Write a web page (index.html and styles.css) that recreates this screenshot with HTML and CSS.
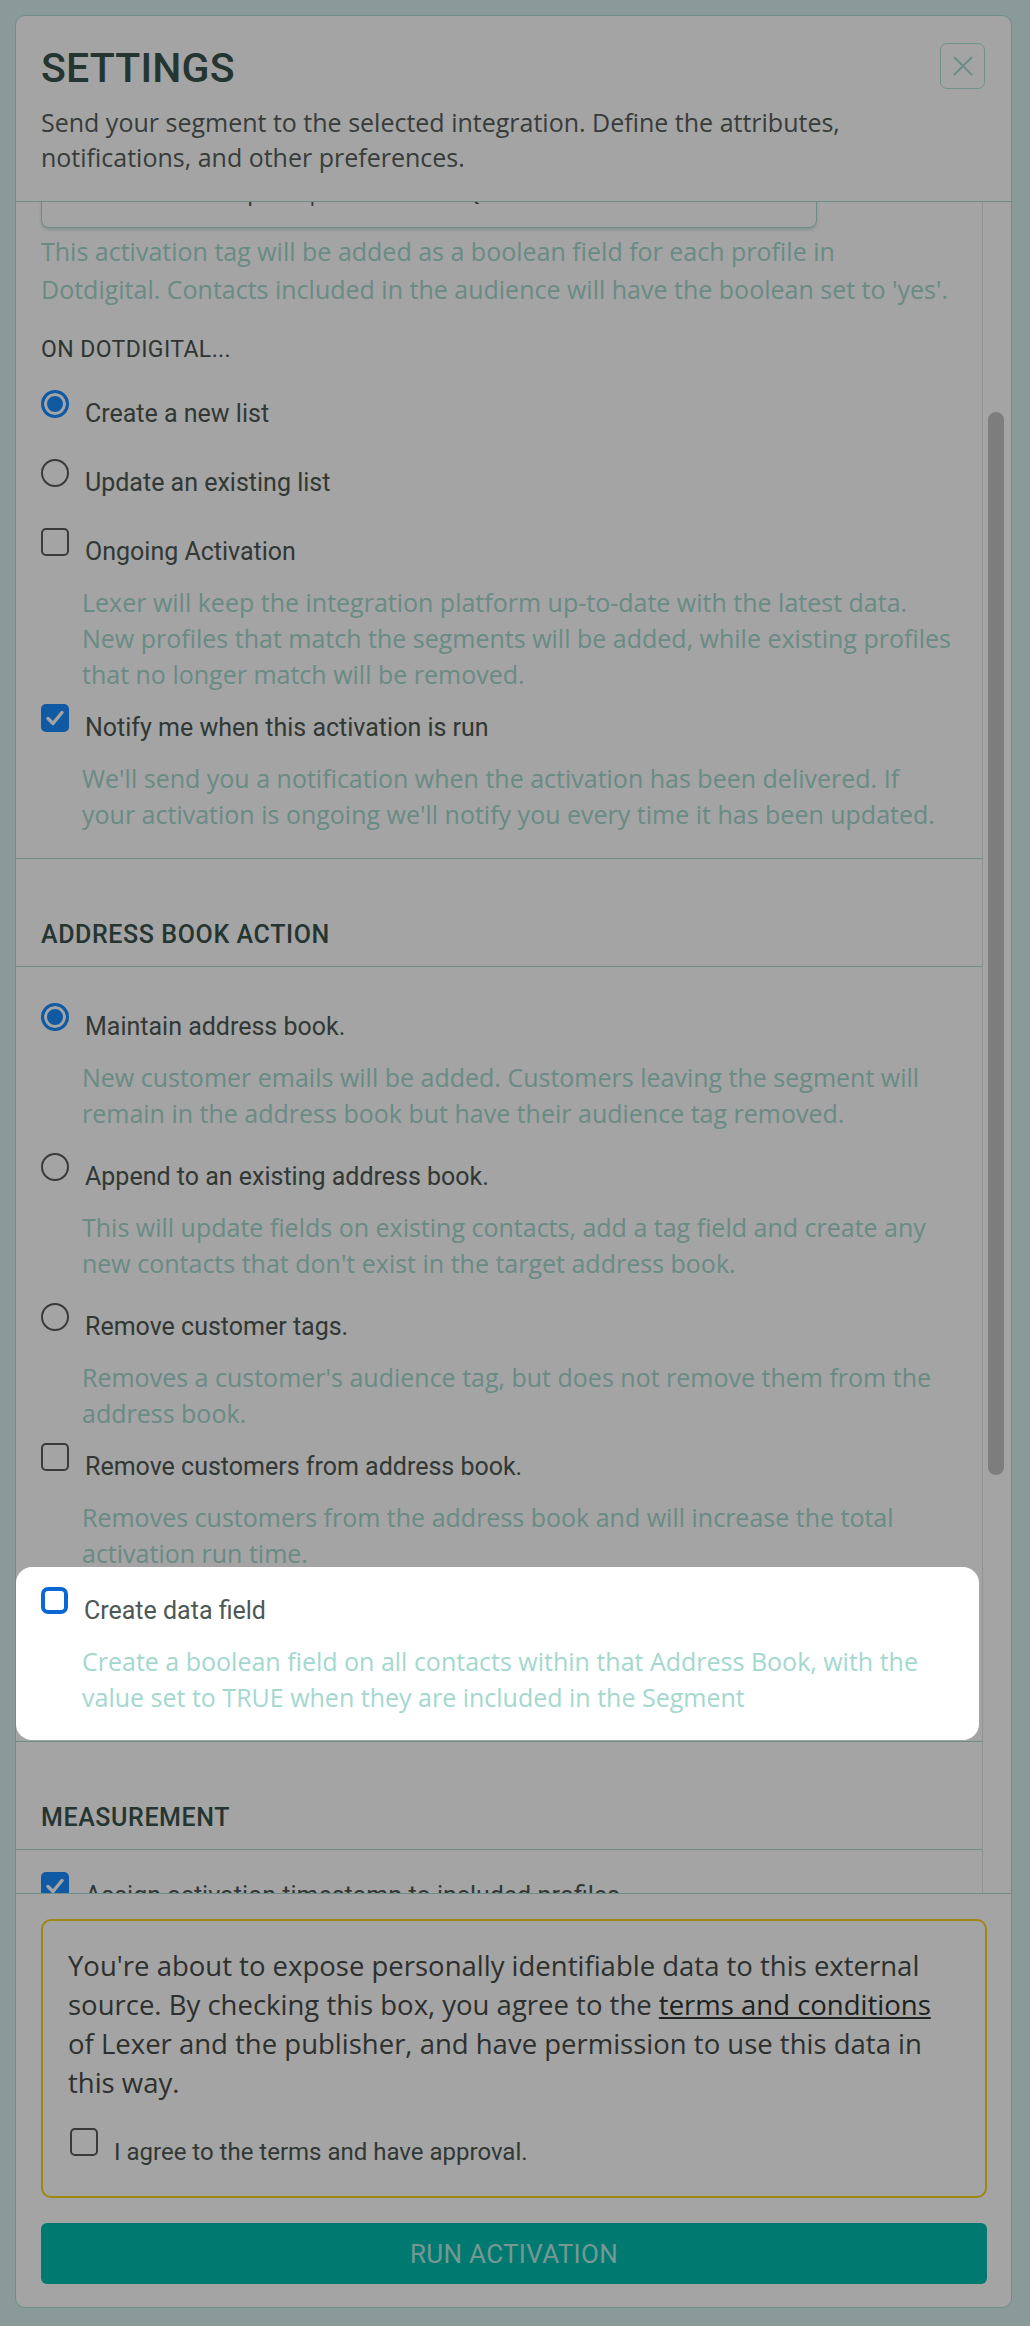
FILE: index.html
```html
<!DOCTYPE html>
<html lang="en">
<head>
  <meta charset="utf-8" />
  <meta name="viewport" content="width=device-width, initial-scale=1" />
  <title>Settings</title>
  <link rel="stylesheet" href="styles.css">
</head>
<body>

  <div class="modal">

    <!-- Cabecera -->
    <div class="modal-head">
      <div class="head-row">
        <h1>SETTINGS</h1>
        <button class="close" aria-label="Close">
          <svg width="22" height="22" viewBox="0 0 22 22"><path d="M2 2 L20 20 M20 2 L2 20" /></svg>
        </button>
      </div>
      <p class="lead">Send your segment to the selected integration. Define the attributes, notifications, and other preferences.</p>
    </div>

    <!-- Contenido con scroll -->
    <div class="modal-main">
      <div class="modal-body" id="modalBody">

        <section class="sec">
          <div class="sec-head"><h2>AUDIENCE</h2></div>
          <div class="sec-body sec-body--top">
            <label class="field-label">Audience name</label>
            <input class="text-input" type="text" value="Repeat purchasers - last 90 days" />
            <label class="field-label field-label--next">Activation tag</label>
            <input class="text-input" id="tagInput" type="text" value="Lexer - Repeat | Purchasers Q3" />
            <p class="hint">This activation tag will be added as a boolean field for each profile in Dotdigital. Contacts included in the audience will have the boolean set to 'yes'.</p>

            <div class="sub-title">ON DOTDIGITAL...</div>

            <div class="opts">
              <div class="opt plain">
                <label class="opt-row"><span class="ctl radio on"></span><span class="opt-label">Create a new list</span></label>
              </div>
              <div class="opt plain">
                <label class="opt-row"><span class="ctl radio"></span><span class="opt-label">Update an existing list</span></label>
              </div>
              <div class="opt">
                <label class="opt-row"><span class="ctl box"></span><span class="opt-label">Ongoing Activation</span></label>
                <p class="help">Lexer will keep the integration platform up-to-date with the latest data. New profiles that match the segments will be added, while existing profiles that no longer match will be removed.</p>
              </div>
              <div class="opt last">
                <label class="opt-row"><span class="ctl box on"><svg viewBox="0 0 28 28"><path d="M7 14.5 L12 19.5 L21 8.5" /></svg></span><span class="opt-label">Notify me when this activation is run</span></label>
                <p class="help">We'll send you a notification when the activation has been delivered. If your activation is ongoing we'll notify you every time it has been updated.</p>
              </div>
            </div>
          </div>
        </section>

        <section class="sec">
          <div class="sec-head"><h2>ADDRESS BOOK ACTION</h2></div>
          <div class="sec-body">
            <div class="opt loose">
              <label class="opt-row"><span class="ctl radio on"></span><span class="opt-label">Maintain address book.</span></label>
              <p class="help">New customer emails will be added. Customers leaving the segment will remain in the address book but have their audience tag removed.</p>
            </div>
            <div class="opt loose">
              <label class="opt-row"><span class="ctl radio"></span><span class="opt-label">Append to an existing address book.</span></label>
              <p class="help">This will update fields on existing contacts, add a tag field and create any new contacts that don't exist in the target address book.</p>
            </div>
            <div class="opt">
              <label class="opt-row"><span class="ctl radio"></span><span class="opt-label">Remove customer tags.</span></label>
              <p class="help">Removes a customer's audience tag, but does not remove them from the address book.</p>
            </div>
            <div class="opt mid">
              <label class="opt-row"><span class="ctl box"></span><span class="opt-label">Remove customers from address book.</span></label>
              <p class="help">Removes customers from the address book and will increase the total activation run time.</p>
            </div>
            <div class="opt last">
              <label class="opt-row"><span class="ctl box focus"></span><span class="opt-label">Create data field</span></label>
              <p class="help">Create a boolean field on all contacts within that Address Book, with the value set to TRUE when they are included in the Segment</p>
            </div>
          </div>
        </section>

        <section class="sec">
          <div class="sec-head"><h2>MEASUREMENT</h2></div>
          <div class="sec-body sec-body--measure">
            <div class="opt">
              <label class="opt-row"><span class="ctl box on"><svg viewBox="0 0 28 28"><path d="M7 14.5 L12 19.5 L21 8.5" /></svg></span><span class="opt-label">Assign activation timestamp to included profiles</span></label>
              <p class="help">Adds the date of this activation to each profile so that results can be measured later in Lexer.</p>
            </div>
            <div class="opt">
              <label class="opt-row"><span class="ctl box"></span><span class="opt-label">Create a control group</span></label>
              <p class="help">Hold back a random 10% of the segment so that campaign uplift can be measured.</p>
            </div>
            <div class="opt last">
              <label class="opt-row"><span class="ctl box"></span><span class="opt-label">Track conversions</span></label>
            </div>
          </div>
        </section>

      </div>

      <!-- barra de scroll -->
      <div class="rail"><div class="thumb"></div></div>
    </div>

    <!-- Pie -->
    <div class="modal-foot">
      <div class="notice">
        <p>You're about to expose personally identifiable data to this external source. By checking this box, you agree to the <a href="#">terms and conditions</a> of Lexer and the publisher, and have permission to use this data in this way.</p>
        <label class="opt-row agree"><span class="ctl box"></span><span class="opt-label">I agree to the terms and have approval.</span></label>
      </div>
      <button class="run">RUN ACTIVATION</button>
    </div>

  </div>

  <!-- Tour: resalta "Create data field" -->
  <div class="tour-spot"></div>

  <script>
    // deja el input del tag asomando bajo la cabecera
    const body = document.getElementById("modalBody");
    const tag = document.getElementById("tagInput");
    body.scrollTop = tag.offsetTop + tag.offsetHeight - 26;
  </script>

</body>
</html>
```

FILE: styles.css
```css
/* --- Base --- */
body {
    margin: 0;
    height: 2326px;
    overflow: hidden;
    background-color: #d5efed;
    font-family: "Open Sans", sans-serif;
    position: relative;
}
.modal {
    margin: 15px 0 0 15px;
    width: 997px;
    height: 2293px;
    box-sizing: border-box;
    background: #fff;
    border: 1px solid #adddd7;
    border-radius: 10px;
    display: flex;
    flex-direction: column;
    overflow: hidden;
}

/* --- Cabecera --- */
.modal-head {
    padding: 28px 26px 26px 25px;
    border-bottom: 1px solid #acdcd6;
}
.head-row { display: flex; justify-content: space-between; align-items: flex-start; }
h1 {
    margin: 0;
    font: 500 41px/48px Roboto, sans-serif;
    color: #3a534d;
    letter-spacing: 0.2px;
}
.close {
    width: 45px; height: 46px; margin-top: -1px;
    padding: 0; border: 1.5px solid #abe4d9; border-radius: 7px;
    background: transparent;
    display: flex; align-items: center; justify-content: center;
}
.close svg path { stroke: #a6ddd2; stroke-width: 2; fill: none; }
.lead {
    margin: 13px 0 0;
    font-size: 25px; line-height: 35px;
    color: #575e5b;
}

/* --- Cuerpo --- */
.modal-main {
    flex: 1;
    min-height: 0;
    display: flex;
}
.modal-body {
    flex: 1;
    min-width: 0;
    overflow-y: scroll;
    scrollbar-width: none;
    position: relative;
}
.modal-body::-webkit-scrollbar { display: none; }
.rail {
    flex: none;
    width: 29px;
    box-sizing: border-box;
    border-left: 1px solid #e4e4e4;
    padding: 210px 7px 0 5px;
}
.thumb {
    height: 1063px;
    border-radius: 9px;
    background: #c3c3c3;
}
.sec-head {
    padding: 60px 28px 15px 25px;
    border-bottom: 1px solid #acdcd6;
}
h2 {
    margin: 0;
    font: 500 25px/32px Roboto, sans-serif;
    color: #3a534d;
    letter-spacing: 0.6px;
}
.sec-body {
    padding: 36px 28px 0 25px;
    border-bottom: 1px solid #acdcd6;
}
.sec-body--top { padding-top: 24px; }
.sec-body--measure { padding-top: 22px; }

.field-label {
    display: block;
    font: 22px/30px Roboto, sans-serif;
    color: #4d5753;
    margin-bottom: 10px;
}
.field-label--next { margin-top: 20px; }
.text-input {
    display: block;
    width: 776px; height: 58px;
    box-sizing: border-box;
    padding: 0 18px 18px 90px;
    border: 1.5px solid #acdcd6; border-radius: 8px;
    box-shadow: 0 2px 3px rgba(120, 170, 160, 0.35);
    font: 25px "Open Sans", sans-serif;
    color: #4d5753;
}
.hint {
    margin: 5px 0 0;
    font-size: 25px; line-height: 37.5px;
    color: #a3d8ce;
}
.sub-title {
    margin-top: 27px;
    font: 23px/30px Roboto, sans-serif;
    letter-spacing: 0.4px;
    color: #4a524f;
}
.opts { margin-top: 25px; }

/* --- Opciones --- */
.opt { padding-bottom: 12px; }
.opt.plain { padding-bottom: 29px; }
.opt.loose { padding-bottom: 22px; }
.opt.mid { padding-bottom: 16px; }
.opt.last { padding-bottom: 26px; }
.opt-row { display: flex; gap: 16px; align-items: flex-start; }
.opt-label {
    padding-top: 8px;
    font: 25px/32px Roboto, sans-serif;
    color: #4d5753;
}
.help {
    margin: 16px 0 0 41px;
    font-size: 25px; line-height: 36px;
    color: #a3d8ce;
}
.ctl {
    flex: none;
    width: 28px; height: 28px;
    box-sizing: border-box;
    border: 2.5px solid #5a5a5a;
    background: #fff;
}
.ctl.radio { border-radius: 50%; }
.ctl.radio.on {
    border: 3px solid #1a8cff;
    background: #1a8cff;
    box-shadow: inset 0 0 0 3px #fff;
}
.ctl.box { border-radius: 5px; }
.ctl.box.on { border: 0; background: #1a8cff; }
.ctl.box svg { display: block; width: 28px; height: 28px; }
.ctl.box svg path { stroke: #fff; stroke-width: 3.4; fill: none; stroke-linecap: round; stroke-linejoin: round; }
.ctl.box.focus { border: 4px solid #0b67d1; border-radius: 7px; width: 27px; height: 27px; }

/* --- Pie --- */
.modal-foot {
    padding: 25px 24px 23px 25px;
    border-top: 1px solid #acdcd6;
}
.notice {
    border: 2px solid #f7d21c;
    border-radius: 10px;
    padding: 25px 30px 28px 25px;
}
.notice p {
    margin: 0;
    font-size: 27.5px; line-height: 39px;
    color: #474c4a;
}
.notice a { color: #2f3532; text-decoration: underline; }
.agree { margin-top: 26px; padding-left: 2px; }
.agree .opt-label { font-size: 24px; }
.run {
    display: block;
    width: 100%; height: 61px;
    margin-top: 25px;
    border: none; border-radius: 6px;
    background: #00bdae;
    color: rgba(255, 255, 255, 0.72);
    font: 26px Roboto, sans-serif;
    letter-spacing: 0.3px;
}

/* --- Tour --- */
.tour-spot {
    position: absolute;
    top: 1567px; left: 16px;
    width: 963px; height: 173px;
    border-radius: 16px;
    box-shadow: 0 0 0 3000px rgba(0, 0, 0, 0.355);
    pointer-events: none;
}
```
